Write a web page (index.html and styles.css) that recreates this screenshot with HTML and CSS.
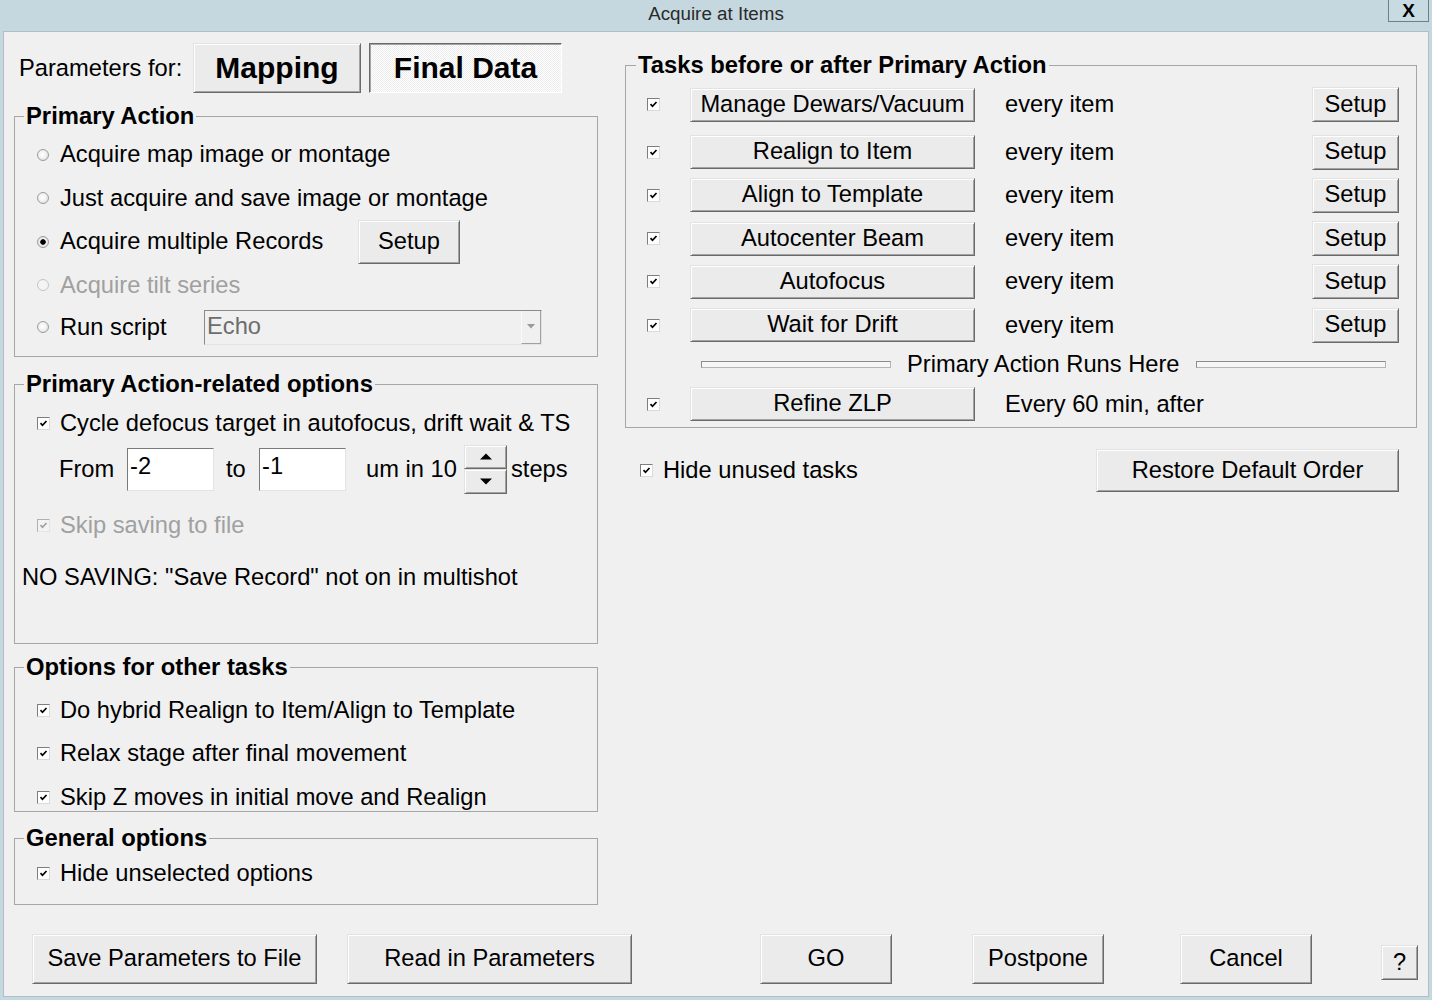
FILE: index.html
```html
<!DOCTYPE html>
<html>
<head>
<meta charset="utf-8">
<title>Acquire at Items</title>
<link rel="stylesheet" href="styles.css">
</head>
<body>
<div class="window">
  <div class="titlebar">
    <span class="title">Acquire at Items</span>
    <button class="close">X</button>
  </div>
  <div class="client">
    <div class="main">
      <div class="left">
        <div class="params">
          <span class="params-label">Parameters for:</span>
          <button class="btn tab">Mapping</button>
          <button class="btn tab tab-final pressed">Final Data</button>
        </div>

        <fieldset class="group g1">
          <legend>Primary Action</legend>
          <div class="list pt4">
            <div class="row r435"><span class="radio"></span><span class="lbl">Acquire map image or montage</span></div>
            <div class="row r435"><span class="radio"></span><span class="lbl">Just acquire and save image or montage</span></div>
            <div class="row r435"><span class="radio on"></span><span class="lbl w-setup">Acquire multiple Records</span><button class="btn setup-l">Setup</button></div>
            <div class="row r435 disabled"><span class="radio dis"></span><span class="lbl">Acquire tilt series</span></div>
            <div class="row r43"><span class="radio"></span><span class="lbl w-script">Run script</span>
              <div class="combo"><span class="combo-text">Echo</span><span class="combo-btn"><svg width="8" height="5" viewBox="0 0 8 5"><path d="M0 0H8L4 4.5Z" fill="#9a9a9a"/></svg></span></div>
            </div>
          </div>
        </fieldset>

        <fieldset class="group g2">
          <legend>Primary Action-related options</legend>
          <div class="list pt4">
            <div class="row r44"><span class="cb"><svg viewBox="0 0 11 11" width="11" height="11"><path d="M2.5 5.2l2 2.1 4-4.3"/></svg></span><span class="lbl">Cycle defocus target in autofocus, drift wait &amp; TS</span></div>
            <div class="row from-row">
              <span class="from">From</span>
              <input class="field" type="text" value="-2">
              <span class="to">to</span>
              <input class="field" type="text" value="-1">
              <span class="umin">um in 10</span>
              <div class="spin">
                <button class="btn spin-btn"><svg width="12" height="7" viewBox="0 0 12 7"><path d="M0 6.5L6 0.5L12 6.5Z" fill="#000"/></svg></button>
                <button class="btn spin-btn"><svg width="12" height="7" viewBox="0 0 12 7"><path d="M0 0.5L6 6.5L12 0.5Z" fill="#000"/></svg></button>
              </div>
              <span class="steps">steps</span>
            </div>
            <div class="row skip-row disabled"><span class="cb dis"><svg viewBox="0 0 11 11" width="11" height="11"><path d="M2.5 5.2l2 2.1 4-4.3"/></svg></span><span class="lbl">Skip saving to file</span></div>
            <div class="row nosave-row"><span>NO SAVING: "Save Record" not on in multishot</span></div>
          </div>
        </fieldset>

        <fieldset class="group g3">
          <legend>Options for other tasks</legend>
          <div class="list pt85">
            <div class="row r435"><span class="cb"><svg viewBox="0 0 11 11" width="11" height="11"><path d="M2.5 5.2l2 2.1 4-4.3"/></svg></span><span class="lbl">Do hybrid Realign to Item/Align to Template</span></div>
            <div class="row r435"><span class="cb"><svg viewBox="0 0 11 11" width="11" height="11"><path d="M2.5 5.2l2 2.1 4-4.3"/></svg></span><span class="lbl">Relax stage after final movement</span></div>
            <div class="row r435"><span class="cb"><svg viewBox="0 0 11 11" width="11" height="11"><path d="M2.5 5.2l2 2.1 4-4.3"/></svg></span><span class="lbl">Skip Z moves in initial move and Realign</span></div>
          </div>
        </fieldset>

        <fieldset class="group g4">
          <legend>General options</legend>
          <div class="list">
            <div class="row r44"><span class="cb"><svg viewBox="0 0 11 11" width="11" height="11"><path d="M2.5 5.2l2 2.1 4-4.3"/></svg></span><span class="lbl">Hide unselected options</span></div>
          </div>
        </fieldset>
      </div>

      <div class="right">
        <fieldset class="group tasks">
          <legend>Tasks before or after Primary Action</legend>
          <div class="task-list">
            <div class="task-row first"><span class="cb"><svg viewBox="0 0 11 11" width="11" height="11"><path d="M2.5 5.2l2 2.1 4-4.3"/></svg></span><button class="btn task-btn">Manage Dewars/Vacuum</button><span class="when">every item</span><button class="btn setup-r">Setup</button></div>
            <div class="task-row"><span class="cb"><svg viewBox="0 0 11 11" width="11" height="11"><path d="M2.5 5.2l2 2.1 4-4.3"/></svg></span><button class="btn task-btn">Realign to Item</button><span class="when">every item</span><button class="btn setup-r">Setup</button></div>
            <div class="task-row"><span class="cb"><svg viewBox="0 0 11 11" width="11" height="11"><path d="M2.5 5.2l2 2.1 4-4.3"/></svg></span><button class="btn task-btn">Align to Template</button><span class="when">every item</span><button class="btn setup-r">Setup</button></div>
            <div class="task-row"><span class="cb"><svg viewBox="0 0 11 11" width="11" height="11"><path d="M2.5 5.2l2 2.1 4-4.3"/></svg></span><button class="btn task-btn">Autocenter Beam</button><span class="when">every item</span><button class="btn setup-r">Setup</button></div>
            <div class="task-row"><span class="cb"><svg viewBox="0 0 11 11" width="11" height="11"><path d="M2.5 5.2l2 2.1 4-4.3"/></svg></span><button class="btn task-btn">Autofocus</button><span class="when">every item</span><button class="btn setup-r">Setup</button></div>
            <div class="task-row"><span class="cb"><svg viewBox="0 0 11 11" width="11" height="11"><path d="M2.5 5.2l2 2.1 4-4.3"/></svg></span><button class="btn task-btn">Wait for Drift</button><span class="when">every item</span><button class="btn setup-r">Setup</button></div>
            <div class="sep-row"><span class="sep-line"></span><span class="sep-text">Primary Action Runs Here</span><span class="sep-line"></span></div>
            <div class="task-row"><span class="cb"><svg viewBox="0 0 11 11" width="11" height="11"><path d="M2.5 5.2l2 2.1 4-4.3"/></svg></span><button class="btn task-btn">Refine ZLP</button><span class="when">Every 60 min, after</span></div>
          </div>
        </fieldset>
        <div class="hide-row">
          <span class="cb"><svg viewBox="0 0 11 11" width="11" height="11"><path d="M2.5 5.2l2 2.1 4-4.3"/></svg></span><span class="lbl">Hide unused tasks</span>
          <button class="btn restore">Restore Default Order</button>
        </div>
      </div>
    </div>

    <div class="footer">
      <button class="btn fbtn wide">Save Parameters to File</button>
      <button class="btn fbtn wide read">Read in Parameters</button>
      <button class="btn fbtn narrow go">GO</button>
      <button class="btn fbtn narrow postpone">Postpone</button>
      <button class="btn fbtn narrow cancel">Cancel</button>
      <button class="btn help">?</button>
    </div>
  </div>
</div>
</body>
</html>
```

FILE: styles.css
```css
* { box-sizing: border-box; }
html, body { margin: 0; padding: 0; }
body {
  width: 1432px;
  height: 1000px;
  overflow: hidden;
  background: #c5d8df;
  font-family: "Liberation Sans", Arial, sans-serif;
  font-size: 23.7px;
  color: #000;
}
.window { display: flex; flex-direction: column; height: 1000px; }

/* title bar */
.titlebar {
  height: 31px;
  display: grid;
  grid-template-columns: 1fr auto 1fr;
}
.title {
  grid-column: 2;
  font-size: 18.8px;
  line-height: 27px;
  color: #2a2a2a;
}
.close {
  grid-column: 3;
  justify-self: end;
  align-self: start;
  margin-right: 3px;
  width: 41px;
  height: 22px;
  padding: 0;
  border: 1px solid #6f7f86;
  border-top: none;
  background: #c8dbe2;
  font: bold 19px "Liberation Sans", Arial, sans-serif;
  line-height: 20px;
  color: #000;
}

/* client area */
.client {
  flex: 1;
  margin: 0 3px 3px;
  background: #f0f0f0;
  border: 1px solid #aebfc5;
  display: flex;
  flex-direction: column;
}
.main {
  display: grid;
  grid-template-columns: 584px 792px;
  column-gap: 27px;
  padding: 11px 0 0 10px;
}
.left, .right { display: flex; flex-direction: column; }

/* generic button */
.btn {
  font: 23.7px "Liberation Sans", Arial, sans-serif;
  color: #000;
  background: #ebebeb;
  border: 1px solid;
  border-color: #e2e2e2 #6a6a6a #6a6a6a #e2e2e2;
  box-shadow: inset 1px 1px 0 #fff, inset -1px -1px 0 #a3a3a3;
  padding: 0;
  line-height: 1;
  display: flex;
  align-items: center;
  justify-content: center;
}
.btn.pressed {
  border-color: #6a6a6a #fff #fff #6a6a6a;
  box-shadow: inset 1px 1px 0 #a3a3a3;
  background: repeating-conic-gradient(#ffffff 0 25%, #ececec 0 50%) 0 0 / 2px 2px;
}

/* params row */
.params { display: flex; align-items: center; height: 50px; }
.params-label { width: 179px; padding-left: 5px; }
.tab { height: 50px; width: 168px; font-weight: bold; font-size: 30px; }
.tab-final { width: 193px; margin-left: 8px; }

/* group boxes */
.group {
  margin: 0;
  padding: 0;
  border: 1px solid #a6a6a6;
  min-width: 0;
}
.group legend {
  font-weight: bold;
  font-size: 23.8px;
  line-height: 26px;
  padding: 0 2px;
  margin-left: 9px;
}
.g1 { margin-top: 10px; height: 254px; }
.g2 { margin-top: 14px; height: 273px; }
.g3 { margin-top: 10px; height: 158px; }
.g4 { margin-top: 13px; height: 80px; }

.list { display: flex; flex-direction: column; }
.pt4 { padding-top: 4px; }
.pt85 { padding-top: 8.5px; }

.row { display: flex; align-items: center; padding-left: 22px; white-space: nowrap; }
.r435 { height: 43.5px; }
.r43 { height: 40px; }
.r44 { height: 44px; }
.disabled { color: #a0a0a0; }

/* radio */
.radio {
  flex: none;
  width: 12px;
  height: 12px;
  border-radius: 50%;
  border: 1px solid #9d9d9d;
  background: radial-gradient(circle at 45% 45%, #ffffff 0, #f2f2f2 45%, #cfcfcf 100%);
  margin-right: 11px;
}
.radio.on {
  background: radial-gradient(circle at 50% 50%, #000 0, #000 2.4px, #f2f2f2 3.1px, #cfcfcf 100%);
}
.radio.dis { border-color: #c4c4c4; background: #f4f4f4; }

/* checkbox */
.cb {
  flex: none;
  width: 13px;
  height: 13px;
  border: 1px solid;
  border-color: #7e7e7e #dadada #dadada #7e7e7e;
  background: #fff;
  margin-right: 10px;
  display: block;
}
.cb svg { display: block; }
.cb path { fill: none; stroke: #000; stroke-width: 1.7; }
.cb.dis { background: #f3f3f3; border-color: #b0b0b0 #e4e4e4 #e4e4e4 #b0b0b0; }
.cb.dis path { stroke: #a0a0a0; }

.w-setup { width: 298px; }
.w-script { width: 144px; }
.setup-l { width: 102px; height: 44px; }

/* combo */
.combo {
  width: 338px;
  height: 35px;
  display: flex;
  border: 1px solid;
  border-color: #8a8a8a #e3e3e3 #e3e3e3 #8a8a8a;
  background: #f0f0f0;
}
.combo-text { flex: 1; color: #6d6d6d; padding-left: 2px; line-height: 30px; }
.combo-btn {
  width: 20px;
  border-left: 1px solid #fafafa;
  border-right: 1px solid #a0a0a0;
  border-bottom: 1px solid #a0a0a0;
  display: flex;
  align-items: center;
  justify-content: center;
}

/* from row */
.from-row { height: 48px; padding-left: 44px; }
.from { width: 68px; }
.field {
  width: 87px;
  height: 43px;
  margin: 0;
  background: #fff;
  border: 1px solid;
  border-color: #7a7a7a #e3e3e3 #e3e3e3 #7a7a7a;
  font: 23.7px "Liberation Sans", Arial, sans-serif;
  color: #000;
  padding: 0 2px 6px;
  outline: none;
}
.to { width: 45px; padding-left: 12px; }
.umin { width: 118px; padding-left: 20px; }
.spin { display: flex; flex-direction: column; width: 43px; height: 49px; }
.spin-btn { flex: 1; }
.steps { margin-left: 4px; }
.skip-row { height: 64px; }
.nosave-row { height: 40px; padding-left: 7px; }

/* right column */
.tasks { margin-top: 9px; height: 376px; }
.tasks legend { margin-left: 10px; }
.task-list { padding-top: 5px; display: flex; flex-direction: column; }
.task-row {
  display: flex;
  align-items: center;
  height: 43.25px;
  padding-left: 21px;
  white-space: nowrap;
}
.task-row.first { height: 43px; margin-bottom: 4.4px; }
.task-row .cb { margin-right: 30px; }
.task-btn { width: 285px; height: 34px; }
.when { margin-left: 30px; }
.setup-r { width: 87px; height: 35px; margin-left: auto; margin-right: 17px; }

.sep-row { height: 36px; display: flex; align-items: center; padding-left: 75px; }
.sep-line {
  width: 190px;
  height: 7px;
  border: 1px solid;
  border-color: #8c8c8c #b4b4b4 #b4b4b4 #8c8c8c;
  background: #f6f6f6;
}
.sep-text { margin: 0 16px; white-space: nowrap; }

.hide-row {
  margin-top: 21px;
  height: 43px;
  display: flex;
  align-items: center;
  padding-left: 15px;
}
.restore { width: 303px; height: 43px; margin-left: auto; margin-right: 18px; }

/* footer */
.footer {
  margin-top: auto;
  margin-bottom: 12px;
  display: flex;
  padding-left: 28px;
}
.fbtn { height: 50px; }
.wide { width: 285px; }
.read { margin-left: 30px; }
.narrow { width: 132px; }
.go { margin-left: 128px; }
.postpone { margin-left: 80px; }
.cancel { margin-left: 76px; }
.help { width: 37px; height: 35px; margin-left: 69px; margin-top: 11px; }
```
